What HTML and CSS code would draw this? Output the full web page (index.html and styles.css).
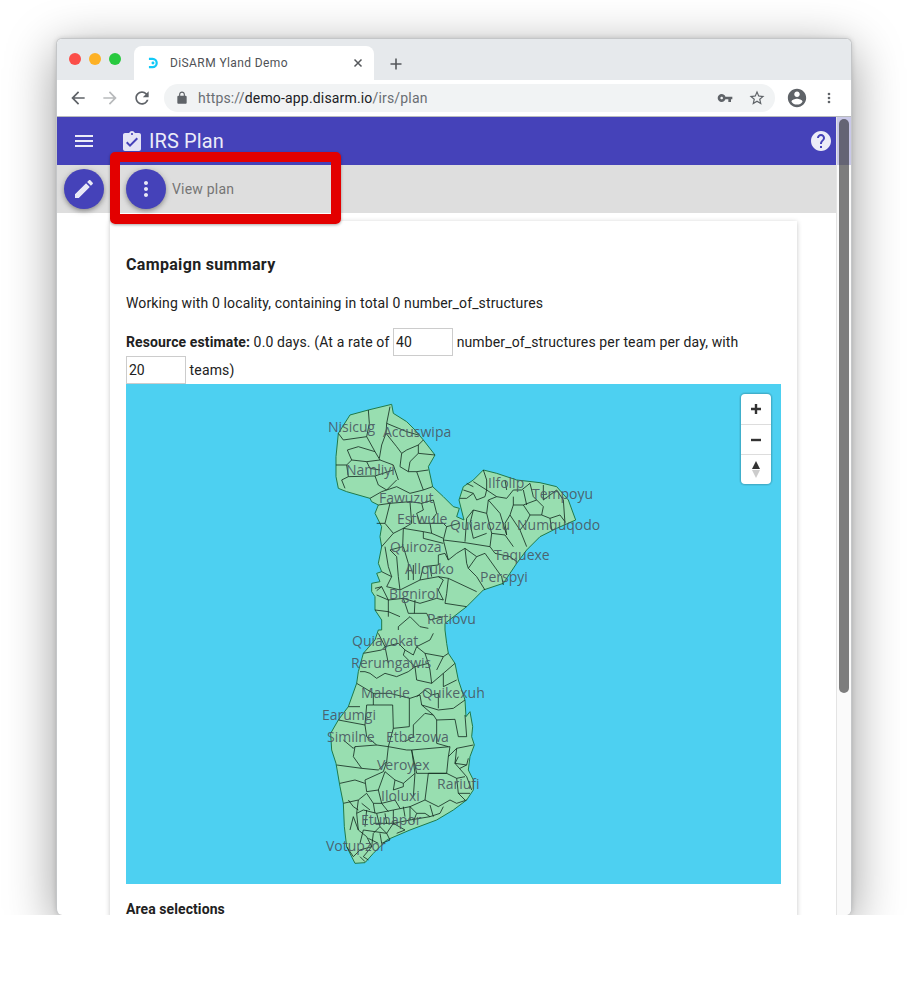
FILE: index.html
```html
<!DOCTYPE html>
<html lang="en">
<head>
<meta charset="utf-8">
<title>DiSARM Yland Demo</title>
<link rel="stylesheet" href="styles.css">
</head>
<body>
<div class="stage">
  <div class="window">
    <div class="tabstrip">
      <div class="lights"><span class="light red"></span><span class="light amber"></span><span class="light green"></span></div>
      <div class="tab">
        <svg class="favicon" viewBox="0 0 12 12"><path class="favicon-d" d="M1 1.500h4a4.500 4.500 0 0 1 0 9H1"/><circle class="favicon-dot" cx="5.400" cy="6" r="1.600"/></svg>
        <span class="tab-title">DiSARM Yland Demo</span>
        <svg class="tab-close" viewBox="0 0 12 12"><path d="M2.500 2.500l7 7M9.500 2.500l-7 7"/></svg>
      </div>
      <svg class="new-tab" viewBox="0 0 12 12"><path d="M6 0.500v11M0.500 6h11"/></svg>
    </div>
    <div class="toolbar">
      <svg class="nav-icon" viewBox="0 0 24 24"><path d="M20 11H7.830l5.590-5.590L12 4l-8 8 8 8 1.410-1.410L7.830 13H20v-2z"/></svg>
      <svg class="nav-icon disabled" viewBox="0 0 24 24"><path d="M12 4l-1.410 1.410L16.170 11H4v2h12.170l-5.580 5.590L12 20l8-8z"/></svg>
      <svg class="nav-icon" viewBox="0 0 24 24"><path d="M17.650 6.350C16.200 4.900 14.210 4 12 4c-4.420 0-7.990 3.580-7.990 8s3.570 8 7.990 8c3.730 0 6.840-2.550 7.730-6h-2.080c-.82 2.330-3.040 4-5.650 4-3.310 0-6-2.690-6-6s2.690-6 6-6c1.660 0 3.140.69 4.220 1.780L13 11h7V4l-2.350 2.350z"/></svg>
      <div class="address">
        <svg class="lock" viewBox="0 0 24 24"><path d="M18 8h-1V6c0-2.760-2.240-5-5-5S7 3.240 7 6v2H6c-1.100 0-2 .9-2 2v10c0 1.100.9 2 2 2h12c1.100 0 2-.9 2-2V10c0-1.100-.9-2-2-2zM9 6c0-1.660 1.340-3 3-3s3 1.340 3 3v2H9V6z"/></svg>
        <span class="url"><span class="dim">https://</span>demo-app.disarm.io<span class="dim">/irs/plan</span></span>
        <svg class="key" viewBox="0 0 24 24"><path d="M12.650 10C11.830 7.670 9.610 6 7 6c-3.310 0-6 2.690-6 6s2.690 6 6 6c2.610 0 4.830-1.670 5.650-4H17v4h4v-4h2v-4H12.650zM7 14c-1.100 0-2-.9-2-2s.9-2 2-2 2 .9 2 2-.9 2-2 2z"/></svg>
        <svg class="star" viewBox="0 0 24 24"><path d="M22 9.240l-7.190-.62L12 2 9.190 8.630 2 9.240l5.460 4.730L5.820 21 12 17.270 18.180 21l-1.630-7.030L22 9.240zM12 15.400l-3.760 2.270 1-4.280-3.320-2.880 4.380-.38L12 6.100l1.710 4.040 4.380.38-3.320 2.880 1 4.280L12 15.400z"/></svg>
      </div>
      <svg class="nav-icon account" viewBox="0 0 24 24"><path d="M12 2C6.480 2 2 6.480 2 12s4.480 10 10 10 10-4.480 10-10S17.520 2 12 2zm0 3c1.660 0 3 1.340 3 3s-1.340 3-3 3-3-1.340-3-3 1.340-3 3-3zm0 14.200c-2.500 0-4.710-1.280-6-3.220.03-1.990 4-3.080 6-3.080 1.990 0 5.970 1.090 6 3.080-1.290 1.940-3.500 3.220-6 3.220z"/></svg>
      <svg class="nav-icon kebab" viewBox="0 0 24 24"><circle cx="12" cy="6" r="2"/><circle cx="12" cy="12" r="2"/><circle cx="12" cy="18" r="2"/></svg>
    </div>
    <div class="viewport">
      <div class="main">
        <header class="appbar">
          <svg class="menu-icon" viewBox="3 6 18 12"><path d="M3 18h18v-2H3v2zm0-5h18v-2H3v2zm0-7v2h18V6H3z"/></svg>
          <svg class="clip-icon" viewBox="3 1 18 20"><path d="M19 3h-4.180C14.400 1.840 13.300 1 12 1c-1.300 0-2.400.84-2.820 2H5c-1.100 0-2 .9-2 2v14c0 1.100.9 2 2 2h14c1.100 0 2-.9 2-2V5c0-1.100-.9-2-2-2zm-7 0c.55 0 1 .45 1 1s-.45 1-1 1-1-.45-1-1 .45-1 1-1zm-2 14l-4-4 1.410-1.410L10 14.170l6.590-6.590L18 9l-8 8z"/></svg>
          <span class="app-title">IRS Plan</span>
          <svg class="help-icon" viewBox="2 2 20 20"><path d="M12 2C6.480 2 2 6.480 2 12s4.480 10 10 10 10-4.480 10-10S17.520 2 12 2zm1 17h-2v-2h2v2zm2.070-7.750l-.9.92C13.450 12.900 13 13.500 13 15h-2v-.5c0-1.100.45-2.100 1.170-2.830l1.240-1.260c.37-.36.59-.86.59-1.410 0-1.100-.9-2-2-2s-2 .9-2 2H8c0-2.210 1.790-4 4-4s4 1.790 4 4c0 .88-.36 1.680-.93 2.250z"/></svg>
        </header>
        <div class="subbar">
          <button class="fab" type="button"><svg viewBox="0 0 24 24"><path d="M3 17.250V21h3.750L17.810 9.940l-3.750-3.750L3 17.250zM20.710 7.040c.39-.39.39-1.020 0-1.410l-2.340-2.340c-.39-.39-1.020-.39-1.410 0l-1.830 1.830 3.750 3.750 1.830-1.830z"/></svg></button>
          <button class="fab" type="button"><svg viewBox="0 0 24 24"><path d="M12 8c1.100 0 2-.9 2-2s-.9-2-2-2-2 .9-2 2 .9 2 2 2zm0 2c-1.100 0-2 .9-2 2s.9 2 2 2 2-.9 2-2-.9-2-2-2zm0 6c-1.100 0-2 .9-2 2s.9 2 2 2 2-.9 2-2-.9-2-2-2z"/></svg></button>
          <span class="view-plan">View plan</span>
        </div>
        <div class="card">
          <h2 class="card-title">Campaign summary</h2>
          <p class="summary">Working with 0 locality, containing in total 0 number_of_structures</p>
          <p class="estimate"><strong>Resource estimate:</strong> 0.0 days. (At a rate of <input class="num" value="40"> number_of_structures per team per day, with <input class="num" value="20"> teams)</p>
          <div class="map">
            <svg class="map-svg" viewBox="0 0 655 500">
              <g transform="translate(184 6) scale(.33333)">
                <path class="land" d="M120,75 L175,60 L245,43 L250,70 L290,95 L315,120 L340,150 L375,195 L355,230 L368,290 L400,320 L430,350 L448,355 L440,380 L462,390 L447,330 L460,290 L490,270 L520,240 L560,250 L620,270 L690,278 L740,290 L775,330 L797,390 L740,415 L690,440 L650,480 L620,520 L580,580 L520,600 L470,650 L405,700 L405,720 L410,760 L415,790 L435,820 L445,870 L465,930 L468,980 L480,965 L488,1010 L485,1040 L493,1065 L480,1100 L475,1140 L490,1170 L490,1200 L470,1230 L430,1260 L380,1290 L300,1320 L230,1350 L190,1390 L165,1418 L135,1420 L110,1370 L103,1310 L100,1240 L90,1190 L78,1120 L65,1080 L62,1030 L85,990 L115,950 L140,880 L145,845 L160,790 L195,750 L205,720 L215,720 L215,690 L195,660 L195,620 L185,605 L185,580 L210,575 L200,550 L215,545 L205,520 L215,470 L210,440 L215,410 L195,370 L205,345 L185,335 L180,325 L110,305 L85,295 L78,260 L78,200 L85,130 Z"/>
                <path class="borders" d="M175,60 L178,100 L170,140 L195,185 L210,210 M240,50 L230,100 L228,130 L215,165 L208,205 M85,130 L100,150 L170,140 M230,100 L290,125 L325,135 M228,130 L260,170 L275,190 L270,230 L295,245 M112,180 L145,170 L195,185 M112,180 L125,210 L170,215 L210,210 L250,225 L265,270 M78,225 L110,225 L125,210 M110,225 L115,260 L95,270 L105,295 M115,260 L195,258 L250,240 M195,258 L205,285 L230,300 L260,270 M300,215 L325,190 L375,195 M300,215 L295,245 L320,245 L340,300 L368,290 M320,245 L355,240 M180,325 L215,305 L260,290 L300,310 L340,300 M340,150 L325,165 L325,190 M205,345 L240,340 L225,400 L250,430 L215,470 M240,340 L300,335 L335,340 L370,330 M300,335 L305,400 L280,415 M460,300 L490,310 L500,330 L525,320 L530,300 L490,275 M490,310 L470,325 L450,325 M520,240 L530,270 L530,300 L560,320 L590,325 L610,300 L635,300 L660,280 M560,320 L535,330 L530,370 L490,360 L470,385 L465,455 M490,360 L480,400 L490,445 M530,370 L545,430 L585,435 L610,470 M535,330 L570,370 L590,435 M545,430 L540,470 L555,490 L600,500 L620,515 M610,320 L610,345 L640,345 L660,375 L650,395 L630,420 L600,375 L610,345 M640,345 L680,330 L700,350 L695,375 L660,375 M660,280 L670,320 L680,330 M700,330 L740,300 L760,330 L765,400 M695,375 L720,385 L725,420 M720,385 L750,375 L765,395 M630,420 L650,470 M490,445 L530,430 M448,400 L410,410 L400,450 L415,510 M250,430 L280,415 L340,425 L365,430 L400,445 M280,415 L278,470 L240,480 M340,425 L340,445 L400,460 M335,340 L340,360 L320,370 L330,400 L360,400 L365,430 M360,400 L400,400 L410,410 M370,330 L380,370 L365,390 M400,450 L465,458 L540,470 M405,490 L415,510 L440,490 L465,475 L500,500 L475,535 M465,475 L470,520 L475,535 L500,560 L525,600 M500,500 L525,490 L575,560 L580,585 M240,480 L260,500 L265,560 L270,600 M225,470 L235,530 L245,560 L230,590 M280,470 L295,520 L295,570 M405,490 L385,495 L385,525 L340,530 L330,570 L385,560 L400,570 L385,600 L400,630 M385,560 L415,565 L500,605 M415,565 L410,610 L405,640 L470,650 M200,615 L235,630 L280,625 L330,640 L380,625 L400,630 M230,590 L270,600 L330,570 M235,630 L235,680 M280,625 L295,670 L350,670 M315,630 L313,670 M195,660 L235,665 L270,680 M265,720 L265,710 L300,680 L330,710 L355,715 M350,670 L360,690 L400,680 M195,595 L215,590 L200,602 M215,545 L245,560 M215,590 L235,630 M310,525 L310,570 M360,530 L365,560 M200,400 L225,400 M325,165 L290,180 L275,190 M170,215 L180,235 L210,240 M470,280 L490,290 M585,270 L590,300 M700,285 L700,330 M640,300 L650,345 M600,375 L585,400 L590,435"/>
              </g>
              <g transform="translate(184 246) scale(.33333)">
                <path class="borders" d="M160,70 L215,60 L225,50 L235,100 M205,10 L225,50 L265,40 L285,60 L310,75 L320,50 L360,30 L370,10 M285,60 L280,75 L315,110 L355,100 L345,70 L320,50 M150,125 L165,125 L180,130 L200,145 L225,130 L260,140 L295,125 L315,110 M315,110 L320,150 L365,160 L400,130 L435,100 M400,130 L400,170 L440,150 M365,160 L360,120 L355,100 M345,70 L400,80 L415,70 M400,80 L380,120 M140,160 L190,190 L240,190 L300,205 L330,195 L335,225 L385,240 L430,235 L465,210 M190,190 L190,225 L248,225 L250,295 M298,205 L298,290 L250,295 M335,225 L370,255 L345,250 L310,285 L310,320 L285,335 M370,255 L380,270 L435,268 L445,320 L470,320 L465,255 M380,270 L380,340 L415,350 M85,270 L165,285 L170,225 L190,225 M165,285 L170,320 L200,345 L235,350 L250,295 M115,230 L150,230 M100,330 L130,355 L135,350 L200,345 M135,350 L130,380 L155,415 L80,405 M235,350 L230,395 L205,420 L155,415 M235,350 L290,360 L305,360 L420,350 L415,380 L410,430 L320,430 L305,360 M305,360 L315,430 L310,500 M230,395 L220,425 L165,450 L170,485 L205,480 L225,425 M90,460 L135,450 L165,460 M225,425 L255,450 L280,460 L315,430 M255,450 L250,480 L280,470 L280,460 M205,480 L215,520 L255,510 M410,430 L355,430 L345,510 M415,380 L440,355 L490,345 M440,355 L435,400 L470,405 L475,385 M435,400 L470,440 L485,480 M410,430 L440,445 L445,490 L480,490 M100,520 L145,510 L170,490 L190,520 L215,520 M145,510 L140,550 L160,540 L200,550 L250,540 L300,530 L345,510 L385,530 L420,510 M140,550 L145,600 L170,620 L185,650 L160,680 M110,650 L130,680 L150,660 L185,650 M160,600 L230,610 L240,630 M200,550 L210,590 L230,610 M250,540 L250,580 L285,600 M300,530 L300,570 L360,560 L390,550 M170,540 L165,590 M130,560 L145,600 M360,525 L370,560 M190,580 L250,580 L300,570 M150,680 L165,695 M160,680 L175,690 M115,510 L130,530 L145,540 M155,520 L180,540 M190,520 L195,550 M215,520 L235,545 M255,510 L270,535 M300,530 L320,550 L345,550 L360,560 M210,590 L190,610 L185,650 M240,630 L215,640 L210,610 M285,600 L260,610 M160,600 L150,640 M120,600 L130,560 M175,625 L205,640 M230,610 L250,580 M320,550 L310,575 M390,550 L400,530 M420,510 L440,520 L470,510 M435,400 L445,380 M450,415 L470,405 M440,445 L465,440 M445,490 L465,510 M320,200 L345,180 L365,195 L385,190 L385,235 M280,530 L285,560 M225,550 L230,580"/>
              </g>
              <g class="labels">
                <text x="202" y="48">Nisicug</text>
                <text x="257" y="53">Accuswipa</text>
                <text x="220" y="91">Namliyi</text>
                <text x="253" y="119">Fawuzut</text>
                <text x="271" y="140">Estwule</text>
                <text x="324" y="146">Quiarozu</text>
                <text x="362" y="104">Ilfolip</text>
                <text x="406" y="115">Tempoyu</text>
                <text x="391" y="146">Numquqodo</text>
                <text x="264" y="168">Quiroza</text>
                <text x="368" y="176">Taquexe</text>
                <text x="279" y="190">Allquko</text>
                <text x="354" y="198">Perspyi</text>
                <text x="263" y="215">Bignirol</text>
                <text x="301" y="240">Ratiovu</text>
                <text x="226" y="262">Quiayokat</text>
                <text x="225" y="284">Rerumgawis</text>
                <text x="235" y="314">Malerle</text>
                <text x="296" y="314">Quikexuh</text>
                <text x="196" y="336">Earumgi</text>
                <text x="201" y="358">Similne</text>
                <text x="260" y="358">Etbezowa</text>
                <text x="251" y="386">Veroyex</text>
                <text x="311" y="405">Rariufi</text>
                <text x="255" y="417">Iloluxi</text>
                <text x="235" y="441">Etunapor</text>
                <text x="200" y="467">Votupzor</text>
              </g>
            </svg>
            <div class="map-controls">
              <div class="ctrl"><svg viewBox="0 0 12 12"><path d="M6 1v10M1 6h10"/></svg></div>
              <div class="ctrl"><svg viewBox="0 0 12 12"><path d="M1 6h10"/></svg></div>
              <div class="ctrl"><svg viewBox="0 0 12 20"><path class="north" d="M6 1l4 8H2z"/><path class="south" d="M6 18l4-8H2z"/></svg></div>
            </div>
          </div>
          <h3 class="area-title">Area selections</h3>
        </div>
      </div>
      <div class="scrollbar"><div class="thumb"></div></div>
    </div>
  </div>
  <div class="highlight"></div>
</div>
</body>
</html>
```
FILE: styles.css
```css
* { box-sizing: border-box; }
html, body { margin: 0; background: #fff; }
body { font-family: Roboto, "Liberation Sans", sans-serif; color: #212121; height: 989px; overflow: hidden; }

.stage { position: relative; height: 915px; overflow: hidden; padding: 38px 0 0 56px; background: #fff; }
.window {
  width: 796px; height: 877px; border: 1px solid #c4c6c8; border-bottom: 0;
  border-radius: 6px; overflow: hidden; background: #fff;
  box-shadow: 0 12px 50px rgba(0,0,0,.4), 0 0 5px rgba(0,0,0,.15);
  display: flex; flex-direction: column;
}

.tabstrip { height: 41px; background: #e6e9ec; display: flex; align-items: flex-start; flex: none; }
.lights { display: flex; gap: 8px; margin: 14px 0 0 12px; }
.light { width: 12px; height: 12px; border-radius: 50%; }
.red { background: #fb4e49; }
.amber { background: #fdb125; }
.green { background: #28c93f; }
.tab {
  width: 240px; height: 34px; margin: 7px 0 0 13px; background: #fff; border-radius: 8px 8px 0 0;
  display: flex; align-items: center; padding: 0 10px 0 14px;
}
.favicon { width: 11px; height: 12px; flex: none; }
.favicon-d { fill: none; stroke: #12c9f7; stroke-width: 2.4; }
.favicon-dot { fill: #12c9f7; }
.tab-title { margin-left: 11px; font-size: 12px; letter-spacing: .4px; color: #4f5256; white-space: nowrap; }
.tab-close { width: 12px; height: 12px; margin-left: auto; }
.tab-close path { stroke: #55585c; stroke-width: 1.5; fill: none; }
.new-tab { width: 12px; height: 12px; margin: 19px 0 0 16px; }
.new-tab path { stroke: #55585c; stroke-width: 1.6; fill: none; }

.toolbar { height: 37px; flex: none; background: #fff; border-bottom: 1px solid #b9bbbd; display: flex; align-items: center; gap: 12px; padding: 0 0 1px 11px; }
.nav-icon { width: 20px; height: 20px; flex: none; fill: #5f6368; }
.nav-icon.disabled { fill: #b8babc; }
.account { width: 22px; height: 22px; margin: 0 -1px; }
.kebab { width: 16px; height: 16px; margin: 0 2px; }
.address { width: 611px; height: 28px; border-radius: 14px; background: #f1f3f4; display: flex; align-items: center; padding: 0 9px 0 11px; flex: none; }
.lock { width: 14px; height: 14px; fill: #5f6368; flex: none; }
.url { margin-left: 9px; font-size: 14px; letter-spacing: .17px; color: #202124; white-space: nowrap; }
.dim { color: #6a6e73; }
.key { width: 16px; height: 16px; margin-left: auto; fill: #5f6368; }
.star { width: 18px; height: 18px; margin-left: 15px; fill: #5f6368; }

.viewport { flex: 1; min-height: 0; display: flex; }
.main { flex: 1; min-width: 0; overflow: hidden; }
.appbar { height: 48px; background: #4542b9; display: flex; align-items: center; padding: 0 5px 0 18px; color: #ececf8; }
.menu-icon { width: 18px; height: 12px; fill: #ececf8; flex: none; }
.clip-icon { width: 18px; height: 20px; margin-left: 30px; fill: #e4e4f5; flex: none; }
.app-title { margin-left: 8px; font-size: 20px; line-height: 24px; letter-spacing: .1px; }
.help-icon { width: 20px; height: 20px; margin-left: auto; fill: #ececf8; flex: none; }
.subbar { height: 48px; background: #dedede; display: flex; align-items: center; padding-left: 7px; gap: 22px; }
.fab {
  width: 40px; height: 40px; border-radius: 50%; border: 0; padding: 8px; background: #4542b9; flex: none;
  box-shadow: 0 2px 4px rgba(0,0,0,.3), 0 1px 8px rgba(0,0,0,.12);
}
.fab svg { display: block; width: 24px; height: 24px; fill: #e8e8f6; }
.view-plan { margin-left: -16px; font-size: 14px; letter-spacing: .2px; color: #757575; }

.card { width: 687px; margin: 8px 0 0 53px; padding: 33px 16px 0; background: #fff; box-shadow: 0 1px 5px rgba(0,0,0,.22); }
.card-title { margin: 0; font-size: 16px; line-height: 22px; font-weight: 700; letter-spacing: .33px; color: #212121; }
.summary { margin: 17px 0 0; font-size: 14px; line-height: 20px; letter-spacing: .135px; }
.estimate { margin: 15px 0 0; font-size: 14px; line-height: 28px; letter-spacing: .135px; }
.estimate strong { font-weight: 700; letter-spacing: .12px; }
.num {
  width: 60px; height: 28px; padding: 0 2px; margin: 0; border: 1px solid #ccc; background: #fff;
  font: 14px Roboto, sans-serif; color: #212121; vertical-align: top; border-radius: 0; outline: 0;
}
.map { position: relative; height: 500px; background: #4dd0f1; }
.map-svg { display: block; width: 655px; height: 500px; }
.land { fill: #98deb0; stroke: #1f7a4a; stroke-width: 1; vector-effect: non-scaling-stroke; }
.borders { fill: none; stroke: #10261c; stroke-width: .8; vector-effect: non-scaling-stroke; }
.labels text { font-family: "Open Sans", "Noto Sans", sans-serif; font-size: 14px; fill: #4a5862; fill-opacity: .92; }
.map-controls {
  position: absolute; top: 9px; right: 9px; width: 32px; border: 1px solid rgba(0,0,0,.1); border-radius: 5px;
  background: #fff; background-clip: padding-box; box-shadow: 0 0 0 1px rgba(0,0,0,.06);
}
.ctrl { height: 30px; display: flex; align-items: center; justify-content: center; border-top: 1px solid #ddd; }
.ctrl:first-child { border-top: 0; }
.ctrl svg { width: 12px; height: 12px; }
.ctrl:last-child svg { height: 20px; }
.ctrl path { stroke: #333; stroke-width: 2.4; fill: none; }
.ctrl .north { fill: #333; stroke: none; }
.ctrl .south { fill: #ccc; stroke: none; }
.area-title { margin: 15px 0 0; font-size: 14px; line-height: 20px; font-weight: 700; letter-spacing: .08px; color: #212121; }

.scrollbar { width: 15px; flex: none; background: linear-gradient(#c9c8e8 48px, #fafafa 48px); border-left: 1px solid #e4e4e4; padding: 2px 2px 0 2px; }
.thumb { height: 574px; border-radius: 6px; background: rgba(0,0,0,.5); }

.highlight { position: absolute; left: 110px; top: 152px; width: 231px; height: 72px; border: 10px solid #e30000; border-radius: 5px; box-shadow: 0 1px 3px rgba(0,0,0,.35); }
```
